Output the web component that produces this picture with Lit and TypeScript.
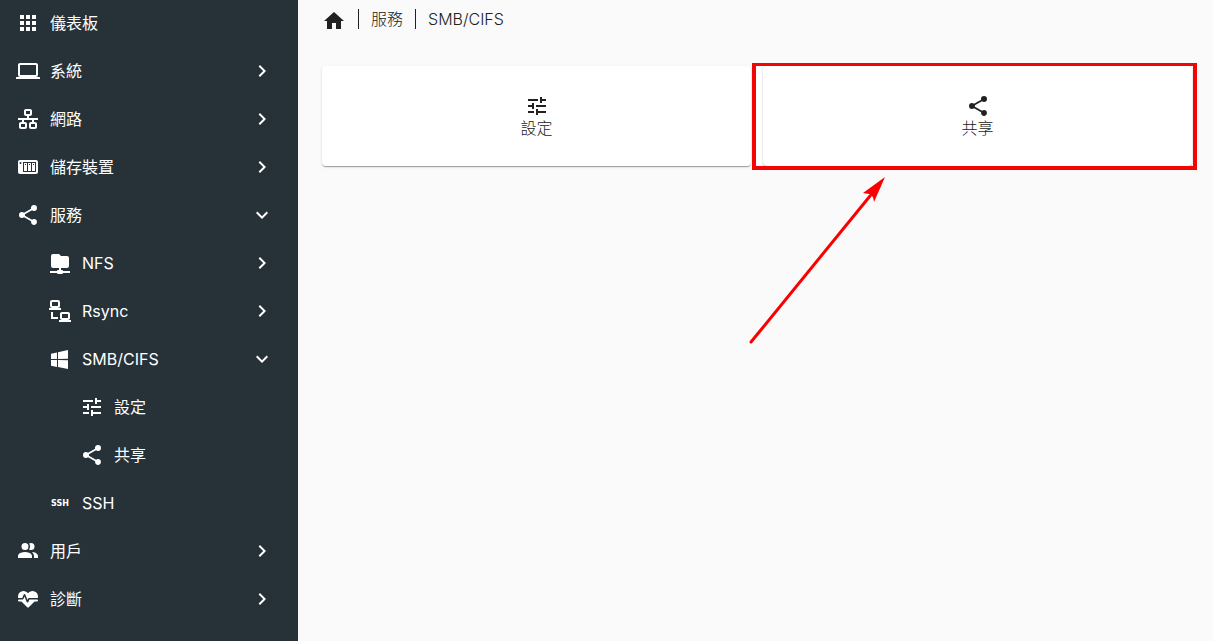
import { LitElement, html, css, nothing } from "lit";
import { customElement, property } from "lit/decorators.js";

const ICONS: Record<string, string> = {
  apps: "M16,20H20V16H16M16,14H20V10H16M10,8H14V4H10M16,8H20V4H16M10,14H14V10H10M4,14H8V10H4M4,20H8V16H4M10,20H14V16H10M4,8H8V4H4V8Z",
  laptop: "M4,6H20V16H4M20,18A2,2 0 0,0 22,16V6C22,4.89 21.1,4 20,4H4C2.89,4 2,4.89 2,6V16A2,2 0 0,0 4,18H0V20H24V18H20Z",
  lan: "M10,2C8.89,2 8,2.89 8,4V7C8,8.11 8.89,9 10,9H11V11H2V13H6V15H5C3.89,15 3,15.89 3,17V20C3,21.11 3.89,22 5,22H9C10.11,22 11,21.11 11,20V17C11,15.89 10.11,15 9,15H8V13H16V15H15C13.89,15 13,15.89 13,17V20C13,21.11 13.89,22 15,22H19C20.11,22 21,21.11 21,20V17C21,15.89 20.11,15 19,15H18V13H22V11H13V9H14C15.11,9 16,8.11 16,7V4C16,2.89 15.11,2 14,2H10M10,4H14V7H10V4M5,17H9V20H5V17M15,17H19V20H15V17Z",
  nas: "M4,5C2.89,5 2,5.89 2,7V17C2,18.11 2.89,19 4,19H20C21.11,19 22,18.11 22,17V7C22,5.89 21.11,5 20,5H4M4.5,7A1,1 0 0,1 5.5,8A1,1 0 0,1 4.5,9A1,1 0 0,1 3.5,8A1,1 0 0,1 4.5,7M7,7H20V17H7V7M8,8V16H11V8H8M12,8V16H15V8H12M16,8V16H19V8H16M9,9H10V10H9V9M13,9H14V10H13V9M17,9H18V10H17V9Z",
  share: "M18,16.08C17.24,16.08 16.56,16.38 16.04,16.85L8.91,12.7C8.96,12.47 9,12.24 9,12C9,11.76 8.96,11.53 8.91,11.3L15.96,7.19C16.5,7.69 17.21,8 18,8A3,3 0 0,0 21,5A3,3 0 0,0 18,2A3,3 0 0,0 15,5C15,5.24 15.04,5.47 15.09,5.7L8.04,9.81C7.5,9.31 6.79,9 6,9A3,3 0 0,0 3,12A3,3 0 0,0 6,15C6.79,15 7.5,14.69 8.04,14.19L15.16,18.34C15.11,18.55 15.08,18.77 15.08,19C15.08,20.61 16.39,21.91 18,21.91C19.61,21.91 20.92,20.61 20.92,19A2.92,2.92 0 0,0 18,16.08Z",
  folder: "M3,15V5A2,2 0 0,1 5,3H11L13,5H19A2,2 0 0,1 21,7V15A2,2 0 0,1 19,17H13V19H14A1,1 0 0,1 15,20H22V22H15A1,1 0 0,1 14,23H10A1,1 0 0,1 9,22H2V20H9A1,1 0 0,1 10,19H11V17H5A2,2 0 0,1 3,15Z",
  sync: "M4,1C2.89,1 2,1.89 2,3V7C2,8.11 2.89,9 4,9H1V11H13V9H10C11.11,9 12,8.11 12,7V3C12,1.89 11.11,1 10,1H4M4,3H10V7H4V3M3,13V18L3,20H10V18H5V13H3M14,13C12.89,13 12,13.89 12,15V19C12,20.11 12.89,21 14,21H11V23H23V21H20C21.11,21 22,20.11 22,19V15C22,13.89 21.11,13 20,13H14M14,15H20V19H14V15Z",
  windows: "M3,12V6.75L9,5.43V11.91L3,12M20,3V11.75L10,11.9V5.21L20,3M3,13L9,13.09V19.9L3,18.75V13M20,13.25V22L10,20.09V13.1L20,13.25Z",
  tune: "M3,17V19H9V17H3M3,5V7H13V5H3M13,21V19H21V17H13V15H11V21H13M7,9V11H3V13H7V15H9V9H7M21,13V11H11V13H21M15,9H17V7H21V5H17V3H15V9Z",
  users: "M16 17V19H2V17S2 13 9 13 16 17 16 17M12.5 7.5A3.5 3.5 0 1 0 9 11A3.5 3.5 0 0 0 12.5 7.5M15.94 13A5.32 5.32 0 0 1 18 17V19H22V17S22 13.37 15.94 13M15 4A3.39 3.39 0 0 0 13.07 4.59A5 5 0 0 1 13.07 10.41A3.39 3.39 0 0 0 15 11A3.5 3.5 0 0 0 15 4Z",
  pulse: "M7.5,4A5.5,5.5 0 0,0 2,9.5C2,10 2.09,10.5 2.22,11H6.3L7.57,7.63C7.87,6.83 9.05,6.75 9.43,7.63L11.5,13L12.09,11.58C12.22,11.25 12.57,11 13,11H21.78C21.91,10.5 22,10 22,9.5A5.5,5.5 0 0,0 16.5,4C14.64,4 13,4.93 12,6.34C11,4.93 9.36,4 7.5,4V4M3,12.5A1,1 0 0,0 2,13.5A1,1 0 0,0 3,14.5H5.44L11,20C12,20.9 12,20.9 13,20L18.56,14.5H21A1,1 0 0,0 22,13.5A1,1 0 0,0 21,12.5H13.4L12.47,14.8C12.07,15.81 10.92,15.67 10.55,14.83L8.5,9.5L7.54,11.83C7.39,12.21 7.05,12.5 6.6,12.5H3Z",
  home: "M10,20V14H14V20H19V12H22L12,3L2,12H5V20H10Z",
  right: "M8.59,16.58L13.17,12L8.59,7.41L10,6L16,12L10,18L8.59,16.58Z",
  down: "M7.41,8.58L12,13.17L16.59,8.58L18,10L12,16L6,10L7.41,8.58Z",
};

interface MenuItem {
  icon: string;
  label: string;
  expandable?: boolean;
  children?: MenuItem[];
}

const MENU: MenuItem[] = [
  { icon: "apps", label: "儀表板" },
  { icon: "laptop", label: "系統", expandable: true },
  { icon: "lan", label: "網路", expandable: true },
  { icon: "nas", label: "儲存裝置", expandable: true },
  {
    icon: "share",
    label: "服務",
    expandable: true,
    children: [
      { icon: "folder", label: "NFS", expandable: true },
      { icon: "sync", label: "Rsync", expandable: true },
      {
        icon: "windows",
        label: "SMB/CIFS",
        expandable: true,
        children: [
          { icon: "tune", label: "設定" },
          { icon: "share", label: "共享" },
        ],
      },
      { icon: "ssh", label: "SSH" },
    ],
  },
  { icon: "users", label: "用戶", expandable: true },
  { icon: "pulse", label: "診斷", expandable: true },
];

@customElement("app-icon")
class AppIcon extends LitElement {
  @property() name = "";

  static styles = css`
    :host {
      display: flex;
      flex: none;
      align-items: center;
      justify-content: center;
      width: 24px;
      height: 24px;
    }
    .glyph {
      display: block;
      width: 24px;
      height: 24px;
      fill: currentColor;
    }
    .word {
      padding-top: 2px;
      font: bold 8px/24px "DejaVu Sans", sans-serif;
    }
  `;

  render() {
    if (this.name === "ssh") return html`<span class="word" aria-hidden="true">SSH</span>`;
    return html`<svg class="glyph" viewBox="0 0 24 24" aria-hidden="true">
      <path d=${ICONS[this.name] ?? ""}></path>
    </svg>`;
  }
}

@customElement("nav-menu")
class NavMenu extends LitElement {
  static styles = css`
    :host {
      display: block;
      background: #263238;
      color: #fff;
      overflow: hidden;
    }
    .menu {
      margin-top: -1px;
    }
    .list {
      list-style: none;
      margin: 0;
      padding: 0;
    }
    .list .list {
      padding-left: 32px;
    }
    .row {
      display: flex;
      align-items: center;
      gap: 10px;
      box-sizing: border-box;
      width: 100%;
      height: 48px;
      padding: 0 24px 0 16px;
      border: 0;
      background: none;
      color: inherit;
      font: inherit;
      text-align: left;
      text-decoration: none;
      cursor: pointer;
    }
    .label {
      flex: 1;
    }
  `;

  private renderItem(item: MenuItem): unknown {
    const content = html`<app-icon name=${item.icon}></app-icon><span class="label">${item.label}</span>`;
    return html`<li>
      ${item.expandable
        ? html`<button class="row" type="button" aria-expanded=${item.children ? "true" : "false"}>
            ${content}<app-icon name=${item.children ? "down" : "right"}></app-icon>
          </button>`
        : html`<a class="row" href="#">${content}</a>`}
      ${item.children ? this.renderList(item.children) : nothing}
    </li>`;
  }

  private renderList(items: MenuItem[]): unknown {
    return html`<ul class="list">${items.map((item) => this.renderItem(item))}</ul>`;
  }

  render() {
    return html`<nav class="menu">${this.renderList(MENU)}</nav>`;
  }
}

@customElement("app-root")
class AppRoot extends LitElement {
  static styles = css`
    :host {
      display: grid;
      grid-template-columns: 298px minmax(0, 1fr);
      min-height: 100vh;
      background: #fafafa;
      color: #212121;
      font: 400 16px/24px Inter, "Noto Sans CJK TC", sans-serif;
    }
    .content {
      padding: 9px 21px 24px 24px;
      font-weight: 300;
    }
    .crumbs {
      display: flex;
      align-items: flex-start;
      gap: 12px;
      line-height: 20px;
    }
    .home {
      display: flex;
      color: #212121;
    }
    .rule {
      width: 1px;
      height: 20px;
      background: #212121;
    }
    .cards {
      display: grid;
      grid-template-columns: 1fr 1fr;
      gap: 12px;
      margin-top: 33px;
    }
    .cell {
      position: relative;
      display: grid;
    }
    .card {
      display: flex;
      flex-direction: column;
      align-items: center;
      padding: 28px 16px;
      border-radius: 4px;
      background: #fff;
      color: #212121;
      line-height: 20px;
      text-decoration: none;
      box-shadow:
        0 2px 1px -1px rgba(0, 0, 0, 0.2),
        0 1px 1px 0 rgba(0, 0, 0, 0.14),
        0 1px 3px 0 rgba(0, 0, 0, 0.12);
    }
    .frame {
      position: absolute;
      inset: -3px -5px -4px -11px;
      border: solid #f20505;
      border-width: 3px 4px 4px;
      background: linear-gradient(90deg, #fff 6px, transparent 6px);
      pointer-events: none;
    }
    .arrow {
      position: absolute;
      top: 110px;
      left: -15px;
      width: 140px;
      height: 170px;
      pointer-events: none;
    }
  `;

  render() {
    return html`
      <nav-menu></nav-menu>
      <main class="content">
        <nav class="crumbs" aria-label="Breadcrumb">
          <a class="home" href="#" aria-label="Home"><app-icon name="home"></app-icon></a>
          <span class="rule"></span>
          <span>服務</span>
          <span class="rule"></span>
          <span>SMB/CIFS</span>
        </nav>
        <div class="cards">
          <div class="cell">
            <a class="card" href="#"><app-icon name="tune"></app-icon><span>設定</span></a>
          </div>
          <div class="cell">
            <a class="card" href="#"><app-icon name="share"></app-icon><span>共享</span></a>
            <div class="frame"></div>
            <svg class="arrow" viewBox="0 0 140 170" aria-hidden="true">
              <path d="M3 166L122 20" fill="none" stroke="#fa0000" stroke-width="3" stroke-linecap="round"></path>
              <path d="M137 1L115 17L121 18L125 21L126 26Z" fill="#fa0000"></path>
            </svg>
          </div>
        </div>
      </main>
    `;
  }
}
